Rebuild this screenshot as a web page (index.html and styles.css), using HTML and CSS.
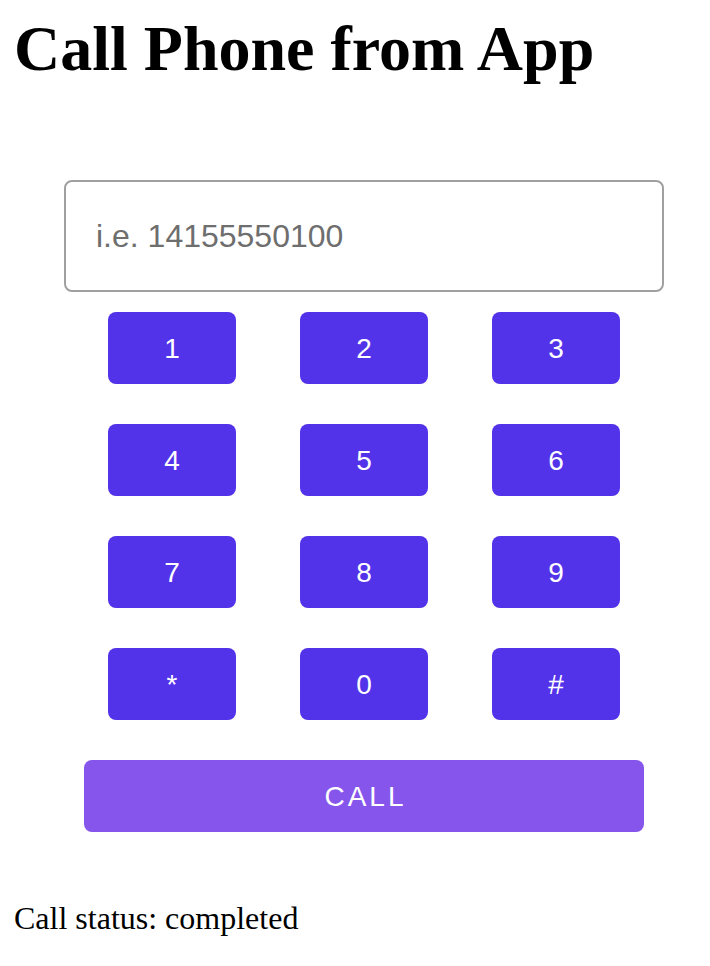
FILE: index.html
```html
<!DOCTYPE html>
<html lang="en">
<head>
<meta charset="utf-8">
<title>Call Phone from App</title>
<link rel="stylesheet" href="styles.css">
</head>
<body>
<div class="page">
  <h1 class="title">Call Phone from App</h1>
  <div class="dialer">
    <input class="number" type="text" placeholder="i.e. 14155550100">
    <div class="keypad">
      <button class="key">1</button>
      <button class="key">2</button>
      <button class="key">3</button>
      <button class="key">4</button>
      <button class="key">5</button>
      <button class="key">6</button>
      <button class="key">7</button>
      <button class="key">8</button>
      <button class="key">9</button>
      <button class="key">*</button>
      <button class="key">0</button>
      <button class="key">#</button>
    </div>
    <button class="call">CALL</button>
  </div>
  <p class="status">Call status: completed</p>
</div>
</body>
</html>
```

FILE: styles.css
```css
html, body {
  margin: 0;
  padding: 0;
  background: #ffffff;
}

.page {
  padding: 13px 14px 0 14px;
  font-family: "Liberation Serif", "Times New Roman", serif;
  color: #000000;
}

.title {
  margin: 0;
  font-size: 64px;
  font-weight: bold;
  line-height: 71px;
}

.dialer {
  width: 600px;
  margin: 96px 0 0 50px;
  display: flex;
  flex-direction: column;
  align-items: center;
}

.number {
  box-sizing: border-box;
  width: 600px;
  height: 112px;
  margin: 0;
  padding: 0 30px;
  border: 2px solid #a0a0a0;
  border-radius: 8px;
  font-family: "Liberation Sans", Arial, sans-serif;
  font-size: 32px;
  color: #000;
  background: #fff;
  outline: none;
}

.number::placeholder {
  color: #6e6e6e;
}

.keypad {
  margin-top: 20px;
  display: grid;
  grid-template-columns: repeat(3, 128px);
  grid-auto-rows: 72px;
  column-gap: 64px;
  row-gap: 40px;
}

.key {
  margin: 0;
  padding: 2px 0 0 0;
  border: none;
  border-radius: 8px;
  background: #5333e9;
  color: #ffffff;
  font-family: "Liberation Sans", Arial, sans-serif;
  font-size: 28px;
}

.call {
  margin-top: 40px;
  width: 560px;
  height: 72px;
  padding: 2px 0 0 0;
  border: none;
  border-radius: 8px;
  background: #8555ec;
  color: #ffffff;
  font-family: "Liberation Sans", Arial, sans-serif;
  font-size: 28px;
  letter-spacing: 3px;
  text-indent: 3px;
}

.status {
  margin: 68px 0 0 0;
  font-size: 32px;
  line-height: 36px;
}
```
